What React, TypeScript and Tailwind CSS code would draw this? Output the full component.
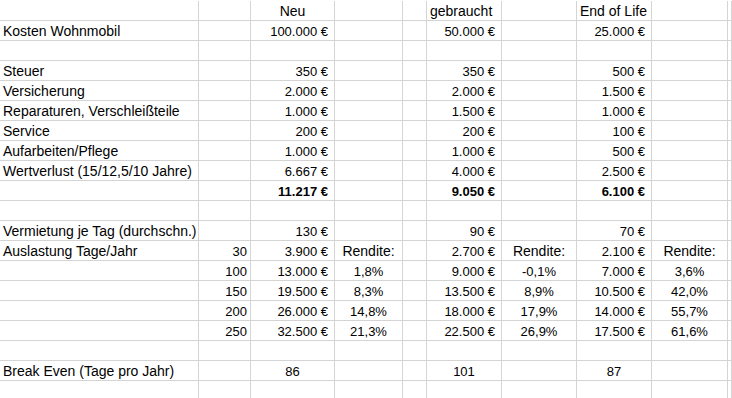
type Cell = { t: string; a?: "l" | "r" | "n" | "c"; b?: boolean; num?: boolean };

const E: Cell = { t: "" };
const L = (t: string): Cell => ({ t, a: "l" });
const R = (t: string): Cell => ({ t, a: "r", num: true });
const N = (t: string): Cell => ({ t, a: "n", num: true });
const C = (t: string): Cell => ({ t, a: "c" });
const P = (t: string): Cell => ({ t, a: "c", num: true });
const B = (t: string): Cell => ({ t, a: "r", b: true, num: true });

const money = (label: string, neu: string, geb: string, eol: string): Cell[] => [
  L(label),
  E,
  R(neu),
  E,
  E,
  R(geb),
  E,
  R(eol),
  E,
  E,
];

const occ = (days: string, a: string, ar: string, b: string, br: string, c: string, cr: string): Cell[] => [
  E,
  N(days),
  R(a),
  P(ar),
  E,
  R(b),
  P(br),
  R(c),
  P(cr),
  E,
];

const blank: Cell[] = Array(10).fill(E);

const rows: Cell[][] = [
  [E, E, C("Neu"), E, E, L("gebraucht"), E, L("End of Life"), E, E],
  money("Kosten Wohnmobil", "100.000 €", "50.000 €", "25.000 €"),
  blank,
  money("Steuer", "350 €", "350 €", "500 €"),
  money("Versicherung", "2.000 €", "2.000 €", "1.500 €"),
  money("Reparaturen, Verschleißteile", "1.000 €", "1.500 €", "1.000 €"),
  money("Service", "200 €", "200 €", "100 €"),
  money("Aufarbeiten/Pflege", "1.000 €", "1.000 €", "500 €"),
  money("Wertverlust (15/12,5/10 Jahre)", "6.667 €", "4.000 €", "2.500 €"),
  [E, E, B("11.217 €"), E, E, B("9.050 €"), E, B("6.100 €"), E, E],
  blank,
  money("Vermietung je Tag (durchschn.)", "130 €", "90 €", "70 €"),
  [L("Auslastung Tage/Jahr"), N("30"), R("3.900 €"), C("Rendite:"), E, R("2.700 €"), C("Rendite:"), R("2.100 €"), C("Rendite:"), E],
  occ("100", "13.000 €", "1,8%", "9.000 €", "-0,1%", "7.000 €", "3,6%"),
  occ("150", "19.500 €", "8,3%", "13.500 €", "8,9%", "10.500 €", "42,0%"),
  occ("200", "26.000 €", "14,8%", "18.000 €", "17,9%", "14.000 €", "55,7%"),
  occ("250", "32.500 €", "21,3%", "22.500 €", "26,9%", "17.500 €", "61,6%"),
  blank,
  [L("Break Even (Tage pro Jahr)"), E, P("86"), E, E, P("101"), E, P("87"), E, E],
  blank,
];

const alignClass = {
  l: "justify-start pl-[3px]",
  r: "justify-end pr-[6px]",
  n: "justify-end pr-[3px]",
  c: "justify-center",
};

export default function App() {
  return (
    <div className="h-[398px] w-[732px] overflow-hidden bg-white pt-px font-['Liberation_Sans',Arial,sans-serif] text-black">
      <div className="grid grid-cols-[199px_52px_84px_68px_24px_75px_75px_75px_76px_1fr]">
        {rows.map((row, i) =>
          row.map((cell, j) => (
            <div
              key={`${i}-${j}`}
              className={`flex h-5 items-end overflow-visible whitespace-nowrap border-b border-r border-[#d4d4d4] pb-[2px] leading-none ${
                cell.num ? "text-[13px]" : "text-[14px]"
              } ${cell.a ? alignClass[cell.a] : ""} ${cell.b ? "font-bold" : ""}`}
            >
              {cell.t}
            </div>
          )),
        )}
      </div>
    </div>
  );
}
